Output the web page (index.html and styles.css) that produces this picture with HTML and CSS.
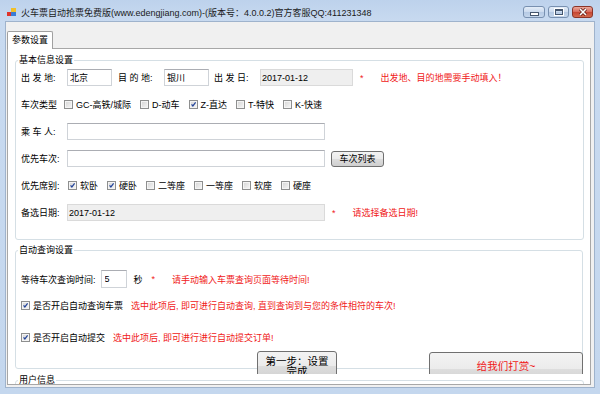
FILE: index.html
```html
<!DOCTYPE html>
<html lang="zh-CN">
  <head>
    <meta charset="UTF-8" />
    <meta name="viewport" content="width=device-width, initial-scale=1.0" />
    <title>火车票自动抢票免费版</title>
    <link rel="stylesheet" href="styles.css">
  </head>
  <body>
    <div class="window">
      <div class="titlebar">
        <svg class="app-icon" viewBox="0 0 10 10">
          <rect x="0" y="5" width="4" height="4" fill="#e0332b" />
          <rect x="4" y="1" width="5" height="4" fill="#f2c029" />
          <rect x="4" y="5" width="5" height="4" fill="#3a7bd5" />
        </svg>
        <span class="title">火车票自动抢票免费版(www.edengjiang.com)-(版本号：4.0.0.2)官方客服QQ:411231348</span>
        <div class="controls">
          <span class="ctl min"><span class="bar"></span></span>
          <span class="ctl max"><span class="box"></span></span>
          <span class="ctl close">
            <svg viewBox="0 0 10 8" width="10" height="8">
              <path d="M2 1 L8 7 M8 1 L2 7" stroke="#5a1a12" stroke-width="3" />
              <path d="M2 1 L8 7 M8 1 L2 7" stroke="#ffffff" stroke-width="1.6" />
            </svg>
          </span>
        </div>
      </div>

      <div class="client">
        <div class="tabs"><span class="tab">参数设置</span></div>
        <div class="tab-page">
          <!-- 基本信息 -->
          <fieldset class="group basic">
            <legend>基本信息设置</legend>
            <div class="row">
              <span class="lbl">出 发 地:</span>
              <input class="txt short" type="text" value="北京" />
              <span class="lbl gap-l">目 的 地:</span>
              <input class="txt short" type="text" value="银川" />
              <span class="lbl gap-s">出 发 日:</span>
              <input class="txt date start-date" type="text" value="2017-01-12" readonly />
              <span class="star">*</span>
              <span class="warn">出发地、目的地需要手动填入！</span>
            </div>
            <div class="row">
              <span class="lbl type-lbl">车次类型</span>
              <span class="check"><span class="cb"></span>GC-高铁/城际</span>
              <span class="check"><span class="cb"></span>D-动车</span>
              <span class="check"><span class="cb on"><svg viewBox="0 0 9 9"><path d="M2 4.3 L3.7 6.4 L7.2 1.8" /></svg></span>Z-直达</span>
              <span class="check"><span class="cb"></span>T-特快</span>
              <span class="check"><span class="cb"></span>K-快速</span>
            </div>
            <div class="row">
              <span class="lbl">乘 车 人:</span>
              <input class="txt wide" type="text" value="" />
            </div>
            <div class="row">
              <span class="lbl">优先车次:</span>
              <input class="txt wide" type="text" value="" />
              <button class="btn list-btn">车次列表</button>
            </div>
            <div class="row">
              <span class="lbl seat-lbl">优先席别:</span>
              <span class="check"><span class="cb on"><svg viewBox="0 0 9 9"><path d="M2 4.3 L3.7 6.4 L7.2 1.8" /></svg></span>软卧</span>
              <span class="check"><span class="cb on"><svg viewBox="0 0 9 9"><path d="M2 4.3 L3.7 6.4 L7.2 1.8" /></svg></span>硬卧</span>
              <span class="check"><span class="cb"></span>二等座</span>
              <span class="check"><span class="cb"></span>一等座</span>
              <span class="check"><span class="cb"></span>软座</span>
              <span class="check"><span class="cb"></span>硬座</span>
            </div>
            <div class="row">
              <span class="lbl">备选日期:</span>
              <input class="txt date wide" type="text" value="2017-01-12" readonly />
              <span class="star">*</span>
              <span class="warn">请选择备选日期!</span>
            </div>
          </fieldset>

          <!-- 自动查询 -->
          <div class="query-wrap">
            <fieldset class="group query">
              <legend>自动查询设置</legend>
              <div class="row tall">
                <span class="wait-lbl">等待车次查询时间:</span>
                <input class="txt secs" type="text" value="5" />
                <span class="unit">秒</span>
                <span class="star">*</span>
                <span class="warn">请手动输入车票查询页面等待时间!</span>
              </div>
              <div class="row opt first-opt">
                <span class="check"><span class="cb on"><svg viewBox="0 0 9 9"><path d="M2 4.3 L3.7 6.4 L7.2 1.8" /></svg></span>是否开启自动查询车票</span>
                <span class="warn tip">选中此项后, 即可进行自动查询, 直到查询到与您的条件相符的车次!</span>
              </div>
              <div class="row opt">
                <span class="check"><span class="cb on"><svg viewBox="0 0 9 9"><path d="M2 4.3 L3.7 6.4 L7.2 1.8" /></svg></span>是否开启自动提交</span>
                <span class="warn tip">选中此项后, 即可进行进行自动提交订单!</span>
              </div>
            </fieldset>
            <button class="btn big step-btn">第一步：设置<br>完成</button>
            <button class="btn big reward-btn">给我们打赏~</button>
          </div>

          <fieldset class="group user">
            <legend>用户信息</legend>
          </fieldset>
        </div>
      </div>
    </div>
  </body>
</html>
```

FILE: styles.css
```css
body {
  margin: 0;
  font-family: "Liberation Sans", "Noto Sans CJK SC", sans-serif;
  font-size: 9px;
  color: #000;
}

/* Window frame */
.window {
  width: 600px;
  height: 394px;
  display: flex;
  flex-direction: column;
  background: linear-gradient(#bdd2ec, #c8daf0 22px, #c4d7ee);
  box-sizing: border-box;
  overflow: hidden;
}

.titlebar {
  height: 21px;
  display: flex;
  align-items: flex-start;
  padding-left: 7px;
  flex-shrink: 0;
}

.app-icon {
  width: 10px;
  height: 10px;
  margin-top: 7px;
  margin-right: 4px;
}

.title {
  font-size: 9px;
  line-height: 12px;
  margin-top: 7px;
  color: #1b1b1b;
}

.controls {
  margin-left: auto;
  display: flex;
  gap: 3px;
  padding-right: 7px;
  margin-top: 6px;
}

.ctl {
  width: 21px;
  height: 12px;
  box-sizing: border-box;
  border: 1px solid #7890b0;
  border-radius: 3px;
  background: linear-gradient(#e4edf8, #cbdaee 50%, #b5c9e4 51%, #c4d6ec);
  display: flex;
  align-items: center;
  justify-content: center;
}

.ctl.min {
  width: 22px;
}

.ctl.min .bar {
  width: 7px;
  height: 2px;
  margin-top: 3px;
  background: #fff;
  border: 1px solid #45566e;
}

.ctl.max .box {
  width: 6px;
  height: 4px;
  border: 1px solid #45566e;
  outline: 1px solid #fff;
  box-shadow: inset 0 1px 0 #45566e;
}

.ctl.close {
  border-color: #8b3428;
  background: linear-gradient(#eba89b, #d6685a 50%, #c54432 51%, #d36a4e);
}

/* Client area */
.client {
  flex: 1;
  margin: 0 5px 6px;
  border: 1px solid #9fb3cc;
  background: #f0f0f0;
  padding: 9px 3px 2px 1px;
  display: flex;
  flex-direction: column;
  min-height: 0;
}

.tabs {
  display: flex;
  height: 17px;
  flex-shrink: 0;
}

.tab {
  position: relative;
  padding: 0 4px;
  border: 1px solid #a0a0a0;
  border-bottom: none;
  border-radius: 2px 2px 0 0;
  background: #fff;
  line-height: 17px;
  height: 18px;
  box-sizing: border-box;
  z-index: 1;
}

.tab-page {
  flex: 1;
  border: 1px solid #a7a7a7;
  background: #fff;
  padding: 5px 6px 0 7px;
  overflow: hidden;
  min-height: 0;
}

/* Group boxes */
.group {
  margin: 0;
  border: 1px solid #d5dfe5;
  border-radius: 3px;
  padding: 3px 6px 18px 5px;
  min-width: 0;
}

.group legend {
  padding: 0 1px;
  margin-left: -3px;
  line-height: 12px;
  font-size: 9px;
}

.row {
  display: flex;
  align-items: center;
  height: 17px;
  margin-bottom: 10px;
  white-space: nowrap;
}

.row:last-child {
  margin-bottom: 0;
}

.lbl {
  width: 46px;
  flex-shrink: 0;
}

.lbl.gap-l {
  margin-left: 6px;
}

.lbl.gap-s {
  margin-left: 5px;
}

.lbl.type-lbl {
  width: 43px;
}

.lbl.seat-lbl {
  width: 47px;
}

.txt {
  height: 17px;
  box-sizing: border-box;
  border: 1px solid #cfd3d8;
  border-top-color: #abadb3;
  background: #fff;
  padding: 0 2px;
  margin: 0;
  font-family: inherit;
  font-size: 9px;
  color: #000;
  outline: none;
}

.txt.short {
  width: 45px;
}

.txt.wide {
  width: 258px;
}

.txt.date {
  background: #efefef;
  border-color: #dadada;
  padding-left: 1px;
}

.txt.start-date {
  width: 93px;
}

.star {
  color: #f01818;
  margin-left: 7px;
}

.warn {
  color: #f01818;
  margin-left: 17px;
}

.check {
  display: inline-flex;
  align-items: center;
  gap: 3px;
  margin-right: 9px;
}

.cb {
  width: 9px;
  height: 9px;
  box-sizing: border-box;
  border: 1px solid #8e8f8f;
  background: linear-gradient(135deg, #d4d4d4, #f7f7f7);
  box-shadow: inset 0 0 0 1px #f4f4f4;
  display: inline-flex;
}

.cb svg {
  width: 7px;
  height: 7px;
}

.cb svg path {
  fill: none;
  stroke: #23449a;
  stroke-width: 1.5;
}

.btn {
  box-sizing: border-box;
  border: 1px solid #707070;
  border-radius: 3px;
  background: linear-gradient(#f3f3f3, #ebebeb 50%, #dddddd 51%, #cfcfcf);
  font-family: inherit;
  font-size: 9px;
  color: #000;
  padding: 0;
  margin: 0;
}

.list-btn {
  width: 53px;
  height: 16px;
  margin-left: 6px;
}

/* Auto query group */
.query-wrap {
  position: relative;
  margin-top: 4px;
  padding-bottom: 5px;
  overflow: hidden;
}

.group.query {
  padding: 14px 6px 23px 5px;
  margin-right: 1px;
}

.row.tall {
  height: 18px;
  margin-bottom: 9px;
}

.wait-lbl {
  margin-right: 5px;
}

.txt.secs {
  width: 26px;
  height: 18px;
  padding-left: 3px;
}

.unit {
  margin-left: 7px;
}

.unit + .star {
  margin-left: 9px;
}

.row.opt {
  height: 16px;
}

.row.first-opt {
  margin-bottom: 16px;
}

.row.opt .check {
  margin-right: 0;
}

.warn.tip {
  margin-left: 8px;
}

.btn.big {
  position: absolute;
  font-size: 10.5px;
  line-height: 10.5px;
}

.step-btn {
  top: 107px;
  left: 242px;
  width: 80px;
  height: 30px;
}

.reward-btn {
  top: 108px;
  left: 414px;
  width: 154px;
  height: 34px;
  color: #f01818;
  padding-bottom: 6px;
}

.group.user {
  padding: 0 6px 10px 5px;
  height: 30px;
}
```
